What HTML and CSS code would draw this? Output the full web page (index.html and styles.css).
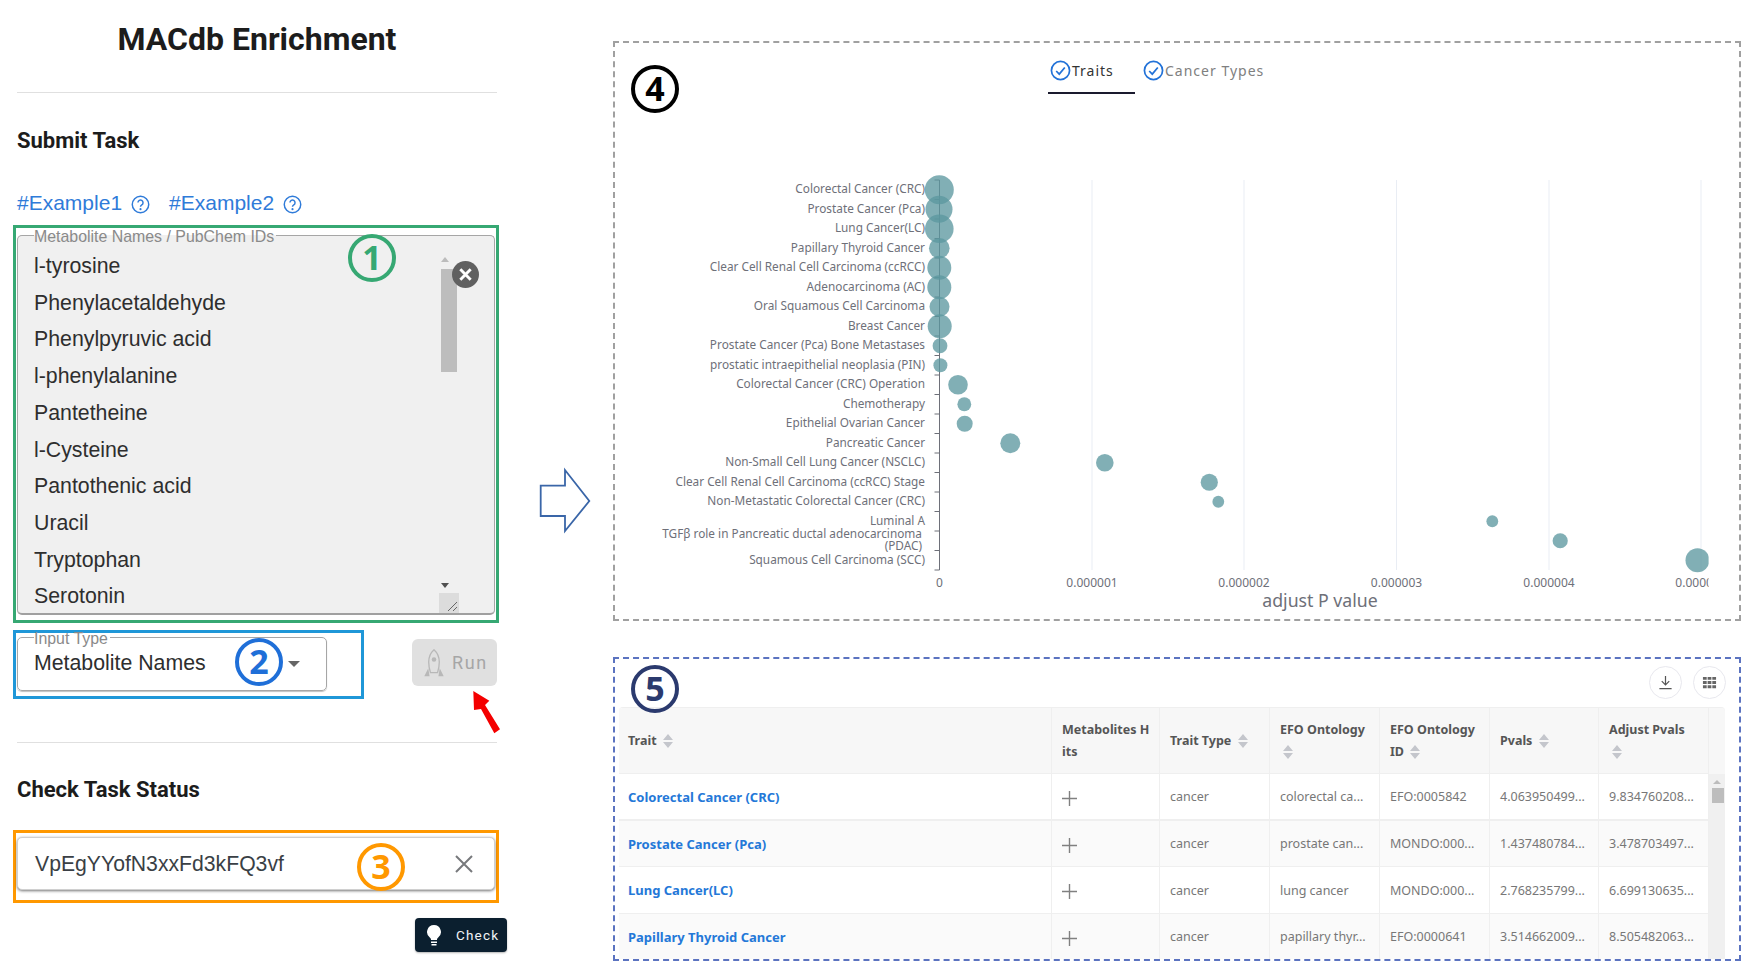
FILE: index.html
```html
<!DOCTYPE html>
<html>
<head>
    <title>MACdb Enrichment</title>
    <meta charset="utf-8">

    <link rel="stylesheet" href="styles.css">

</head>
<body>
<div class="page">

    <div class="sidebar">
        <h1>MACdb Enrichment</h1>
        <hr>

        <h2 class="submit-title">Submit Task</h2>

        <div class="examples">
            <a>#Example1</a>
            <svg class="help" viewBox="0 0 18 18"><circle cx="9" cy="9" r="7.8"/><path d="M6.6 7.2a2.4 2.4 0 1 1 3.6 2.1c-.8.5-1.2.9-1.2 1.8"/><circle class="dot" cx="9" cy="13.4" r="1"/></svg>
            <a class="second">#Example2</a>
            <svg class="help" viewBox="0 0 18 18"><circle cx="9" cy="9" r="7.8"/><path d="M6.6 7.2a2.4 2.4 0 1 1 3.6 2.1c-.8.5-1.2.9-1.2 1.8"/><circle class="dot" cx="9" cy="13.4" r="1"/></svg>
        </div>

        <div class="frame frame-green">
            <fieldset class="names">
                <legend>Metabolite Names / PubChem IDs</legend>
                <div class="name-list">
                    <div>l-tyrosine</div>
                    <div>Phenylacetaldehyde</div>
                    <div>Phenylpyruvic acid</div>
                    <div>l-phenylalanine</div>
                    <div>Pantetheine</div>
                    <div>l-Cysteine</div>
                    <div>Pantothenic acid</div>
                    <div>Uracil</div>
                    <div>Tryptophan</div>
                    <div>Serotonin</div>
                </div>
                <div class="scroll-up"></div>
                <div class="scroll-thumb"></div>
                <div class="scroll-down"></div>
                <div class="resizer">
                    <svg viewBox="0 0 20 20"><path d="M9 18 18 9M14 18l4-4"/></svg>
                </div>
                <svg class="clear-all" viewBox="0 0 26 26"><circle cx="13" cy="13" r="13"/><path d="M8 8l10 10M18 8 8 18"/></svg>
            </fieldset>
            <div class="mark mark-green">1</div>
        </div>

        <div class="type-row">
            <div class="frame frame-blue">
                <fieldset class="type-field">
                    <legend>Input Type</legend>
                    <div class="type-value">
                        <span>Metabolite Names</span>
                        <i class="caret"></i>
                    </div>
                </fieldset>
                <div class="mark mark-blue">2</div>
            </div>
            <button class="run">
                <svg viewBox="0 0 24 34"><path class="hull" d="M12 2c4.500 4 6 9 6 14 0 5-1 9-2 12H8c-1-3-2-7-2-12 0-5 1.500-10 6-14z"/><circle cx="12" cy="13" r="2.600"/><path d="M5.500 23 1 32h6zM18.500 23 23 32h-6z"/></svg>
                <span>Run</span>
            </button>
            <svg class="red-arrow" viewBox="0 0 30 46"><path d="M1.300 1l16 9.700L13 15l15 24.300-5.700 4L9 19l-7 1z"/></svg>
        </div>

        <hr class="second-rule">

        <h2 class="check-title">Check Task Status</h2>

        <div class="frame frame-orange">
            <div class="task-input">
                <span>VpEgYYofN3xxFd3kFQ3vf</span>
                <svg viewBox="0 0 18 18"><path d="M1 1l16 16M17 1 1 17"/></svg>
            </div>
            <div class="mark mark-orange">3</div>
        </div>

        <button class="check">
            <svg viewBox="0 0 16 22"><path d="M8 1a7 7 0 0 0-4 12.700c.8.6 1 1.300 1 2.300h6c0-1 .2-1.700 1-2.300A7 7 0 0 0 8 1z"/><rect x="5" y="17.500" width="6" height="1.500"/><rect x="5.500" y="20" width="5" height="1.500"/></svg>
            <span>Check</span>
        </button>
    </div>

    <svg class="flow-arrow" viewBox="530 460 70 80"><path d="M540.700 485.700H565V470l24.300 31L565 531v-15h-24.300z"/></svg>

    <div class="main">

        <div class="panel chart-panel">
            <div class="mark mark-black">4</div>
            <div class="tabs">
                <div class="tab active">
                    <svg viewBox="0 0 22 22"><circle cx="11" cy="11" r="9.500"/><path d="M6.500 11.500l3.200 3.300 5.800-7"/></svg>
                    <span>Traits</span>
                </div>
                <div class="tab">
                    <svg viewBox="0 0 22 22"><circle cx="11" cy="11" r="9.500"/><path d="M6.500 11.500l3.200 3.300 5.800-7"/></svg>
                    <span>Cancer Types</span>
                </div>
            </div>

            <svg class="chart" viewBox="615 94 1123 525">
                <defs>
                    <clipPath id="plot"><rect x="600" y="94" width="1108.600" height="525"/></clipPath>
                </defs>

                <g class="grid">
                    <path d="M1092 180V570M1244 180V570M1396.500 180V570M1549 180V570M1701 180V570"/>
                </g>

                <g class="axis">
                    <path d="M939.500 180V570M934.500 180h5M934.500 199.500h5M934.500 219h5M934.500 238.500h5M934.500 258h5M934.500 277.500h5M934.500 297h5M934.500 316.500h5M934.500 336h5M934.500 355.500h5M934.500 375h5M934.500 394.500h5M934.500 414h5M934.500 433.500h5M934.500 453h5M934.500 472.500h5M934.500 492h5M934.500 511.500h5M934.500 531h5M934.500 550.500h5M934.500 570h5"/>
                </g>

                <g class="names-axis">
                    <text x="925" y="193">Colorectal Cancer (CRC)</text>
                    <text x="925" y="212.500">Prostate Cancer (Pca)</text>
                    <text x="925" y="232">Lung Cancer(LC)</text>
                    <text x="925" y="251.500">Papillary Thyroid Cancer</text>
                    <text x="925" y="271">Clear Cell Renal Cell Carcinoma (ccRCC)</text>
                    <text x="925" y="290.500">Adenocarcinoma (AC)</text>
                    <text x="925" y="310">Oral Squamous Cell Carcinoma</text>
                    <text x="925" y="329.500">Breast Cancer</text>
                    <text x="925" y="349">Prostate Cancer (Pca) Bone Metastases</text>
                    <text x="925" y="368.500">prostatic intraepithelial neoplasia (PIN)</text>
                    <text x="925" y="388">Colorectal Cancer (CRC) Operation</text>
                    <text x="925" y="407.500">Chemotherapy</text>
                    <text x="925" y="427">Epithelial Ovarian Cancer</text>
                    <text x="925" y="446.500">Pancreatic Cancer</text>
                    <text x="925" y="466">Non-Small Cell Lung Cancer (NSCLC)</text>
                    <text x="925" y="485.500">Clear Cell Renal Cell Carcinoma (ccRCC) Stage</text>
                    <text x="925" y="505">Non-Metastatic Colorectal Cancer (CRC)</text>
                    <text x="925" y="524.500">Luminal A</text>
                    <text x="922" y="537.500">TGFβ role in Pancreatic ductal adenocarcinoma</text>
                    <text x="922" y="549.500">(PDAC)</text>
                    <text x="925" y="563.500">Squamous Cell Carcinoma (SCC)</text>
                </g>

                <g clip-path="url(#plot)">
                    <g class="values-axis">
                        <text x="939.500" y="587">0</text>
                        <text x="1092" y="587">0.000001</text>
                        <text x="1244" y="587">0.000002</text>
                        <text x="1396.500" y="587">0.000003</text>
                        <text x="1549" y="587">0.000004</text>
                        <text x="1701" y="587">0.000005</text>
                    </g>
                    <g class="bubbles">
                        <circle cx="939.300" cy="189.750" r="14.500"/>
                        <circle cx="939" cy="209.250" r="13.500"/>
                        <circle cx="939.300" cy="228.750" r="14.300"/>
                        <circle cx="939.300" cy="248.250" r="10.300"/>
                        <circle cx="939.300" cy="267.750" r="12"/>
                        <circle cx="939.300" cy="287.250" r="12"/>
                        <circle cx="939.500" cy="306.750" r="10"/>
                        <circle cx="939.700" cy="326.250" r="12"/>
                        <circle cx="940" cy="345.750" r="7.400"/>
                        <circle cx="940.400" cy="365.250" r="7"/>
                        <circle cx="958" cy="384.750" r="9.800"/>
                        <circle cx="964.300" cy="404.250" r="6.900"/>
                        <circle cx="964.700" cy="423.750" r="8"/>
                        <circle cx="1010.300" cy="443.250" r="10"/>
                        <circle cx="1104.800" cy="462.750" r="8.800"/>
                        <circle cx="1209.300" cy="482.250" r="8.600"/>
                        <circle cx="1218.300" cy="501.750" r="5.900"/>
                        <circle cx="1492.300" cy="521.250" r="5.900"/>
                        <circle cx="1560.200" cy="540.750" r="7.600"/>
                        <circle cx="1697.500" cy="560.250" r="12"/>
                    </g>
                </g>

                <text class="axis-name" x="1320" y="607">adjust P value</text>
            </svg>
        </div>

        <div class="panel table-panel">
            <div class="mark mark-navy">5</div>

            <div class="toolbar">
                <div class="round-btn">
                    <svg viewBox="0 0 16 16"><path d="M8 1v9M4 6.500 8 10.500l4-4M1.500 14.500h13"/></svg>
                </div>
                <div class="round-btn">
                    <svg viewBox="0 0 16 16"><path class="cells" d="M1 2h4v3H1zM6 2h4v3H6zM11 2h4v3h-4zM1 6.500h4v3H1zM6 6.500h4v3H6zM11 6.500h4v3h-4zM1 11h4v3H1zM6 11h4v3H6zM11 11h4v3h-4z"/></svg>
                </div>
            </div>

            <div class="table-wrap">
                <table>
                    <colgroup>
                        <col class="c1"><col class="c2"><col class="c3"><col class="c4"><col class="c5"><col class="c6"><col class="c7">
                    </colgroup>
                    <thead>
                        <tr>
                            <th>Trait <svg class="sort" viewBox="0 0 10 14"><path d="M5 0l5 6H0zM5 14 0 8h10z"/></svg></th>
                            <th class="hits">Metabolites H<br>its</th>
                            <th>Trait Type <svg class="sort" viewBox="0 0 10 14"><path d="M5 0l5 6H0zM5 14 0 8h10z"/></svg></th>
                            <th>EFO Ontology <svg class="sort" viewBox="0 0 10 14"><path d="M5 0l5 6H0zM5 14 0 8h10z"/></svg></th>
                            <th>EFO Ontology ID <svg class="sort" viewBox="0 0 10 14"><path d="M5 0l5 6H0zM5 14 0 8h10z"/></svg></th>
                            <th>Pvals <svg class="sort" viewBox="0 0 10 14"><path d="M5 0l5 6H0zM5 14 0 8h10z"/></svg></th>
                            <th>Adjust Pvals <svg class="sort" viewBox="0 0 10 14"><path d="M5 0l5 6H0zM5 14 0 8h10z"/></svg></th>
                        </tr>
                    </thead>
                    <tbody>
                        <tr>
                            <td><a>Colorectal Cancer (CRC)</a></td>
                            <td><svg class="plus" viewBox="0 0 14 14"><path d="M7 0v14M0 7h14"/></svg></td>
                            <td>cancer</td>
                            <td>colorectal ca...</td>
                            <td>EFO:0005842</td>
                            <td>4.063950499...</td>
                            <td>9.834760208...</td>
                        </tr>
                        <tr>
                            <td><a>Prostate Cancer (Pca)</a></td>
                            <td><svg class="plus" viewBox="0 0 14 14"><path d="M7 0v14M0 7h14"/></svg></td>
                            <td>cancer</td>
                            <td>prostate can...</td>
                            <td>MONDO:000...</td>
                            <td>1.437480784...</td>
                            <td>3.478703497...</td>
                        </tr>
                        <tr>
                            <td><a>Lung Cancer(LC)</a></td>
                            <td><svg class="plus" viewBox="0 0 14 14"><path d="M7 0v14M0 7h14"/></svg></td>
                            <td>cancer</td>
                            <td>lung cancer</td>
                            <td>MONDO:000...</td>
                            <td>2.768235799...</td>
                            <td>6.699130635...</td>
                        </tr>
                        <tr>
                            <td><a>Papillary Thyroid Cancer</a></td>
                            <td><svg class="plus" viewBox="0 0 14 14"><path d="M7 0v14M0 7h14"/></svg></td>
                            <td>cancer</td>
                            <td>papillary thyr...</td>
                            <td>EFO:0000641</td>
                            <td>3.514662009...</td>
                            <td>8.505482063...</td>
                        </tr>
                    </tbody>
                </table>
                <div class="table-scroll">
                    <div class="table-scroll-head"></div>
                    <div class="table-scroll-up"></div>
                    <div class="table-scroll-thumb"></div>
                </div>
            </div>
        </div>

    </div>
</div>
</body>
</html>
```

FILE: styles.css
```css
html,body{
    padding: 0;
    margin: 0;
    background: #fff;
}

.page{
    position: relative;
    display: flex;
    width: 1741px;
    height: 962px;
    overflow: hidden;
    font-family: "Liberation Sans", Arial, sans-serif;
}

/* left column */
.sidebar{
    width: 480px;
    margin-left: 17px;
    flex: none;
}

h1{
    margin: 0;
    font-family: Roboto, sans-serif;
    font-size: 32px;
    font-weight: 700;
    line-height: 79px;
    text-align: center;
    color: #1c1c1c;
}

hr{
    margin: 13px 0 0;
    border: 0;
    height: 1px;
    background: #e0e0e0;
}

.second-rule{
    margin-top: 43px;
}

h2{
    margin: 0;
    font-family: Roboto, sans-serif;
    font-size: 22px;
    font-weight: 700;
    line-height: 30px;
    color: #1c1c1c;
}

.submit-title{
    margin-top: 33px;
}

.check-title{
    margin-top: 32px;
}

.examples{
    display: flex;
    align-items: center;
    height: 30px;
    margin-top: 32px;
    font-size: 21px;
    color: #2f7bd9;
}

.examples .second{
    margin-left: 19px;
}

.help{
    width: 19px;
    height: 19px;
    margin: 3px 0 0 9px;
    fill: none;
    stroke: #2f7bd9;
    stroke-width: 1.4;
}

.help .dot{
    fill: #2f7bd9;
    stroke: none;
}

.frame{
    position: relative;
    box-sizing: border-box;
    margin-left: -4px;
    border: 3px solid;
    padding: 0 1px;
}

.frame-green{
    margin-top: 7px;
    width: 486px;
    height: 398px;
    border-color: #36a873;
}

.frame-blue{
    width: 351px;
    height: 69px;
    border-color: #1f97d8;
    padding-right: 34px;
}

.frame-orange{
    margin-top: 25px;
    width: 486px;
    height: 73px;
    padding-top: 4px;
    border-color: #ff9800;
}

fieldset{
    position: relative;
    margin: 0;
    padding: 0;
    min-width: 0;
    border: 1px solid #a6a6a6;
    border-radius: 5px;
}

legend{
    margin-left: 16px;
    padding: 0 2px 0 0;
    height: 14px;
    line-height: 18px;
    font-size: 15.9px;
    color: #8a8a8a;
}

.names{
    height: 387px;
    box-sizing: border-box;
    background: #f0f0f0;
    border-bottom: 2px solid #a0a0a0;
}

.name-list{
    padding: 6px 0 0 16px;
    font-size: 21.3px;
    line-height: 36.7px;
    color: #2e2e2e;
    overflow: hidden;
    height: 366px;
}

.scroll-up,
.scroll-down{
    position: absolute;
    left: 423px;
    width: 0;
    height: 0;
    border-left: 4px solid transparent;
    border-right: 4px solid transparent;
}

.scroll-up{
    top: 15px;
    border-bottom: 5px solid #bcbcbc;
}

.scroll-down{
    top: 341px;
    border-top: 5px solid #505050;
}

.scroll-thumb{
    position: absolute;
    left: 423px;
    top: 27px;
    width: 16px;
    height: 103px;
    background: #bdbdbd;
}

.resizer{
    position: absolute;
    left: 421px;
    bottom: 0;
    width: 20px;
    height: 20px;
    background: #dcdcdc;
}

.resizer svg{
    display: block;
    width: 20px;
    height: 20px;
    fill: none;
    stroke: #666;
    stroke-width: 1;
}

.clear-all{
    position: absolute;
    left: 434px;
    top: 19px;
    width: 27px;
    height: 27px;
    fill: #606060;
    stroke: #fff;
    stroke-width: 2.8;
}

.clear-all circle{
    stroke: none;
}

.type-row{
    position: relative;
    display: flex;
    align-items: flex-start;
    margin-top: 7px;
}

.type-field{
    height: 56px;
    background: #fff;
    box-shadow: 0 1px 1px rgba(0,0,0,.25);
}

.type-field legend{
    height: 8px;
    line-height: 12px;
}

.type-value{
    display: flex;
    align-items: center;
    justify-content: space-between;
    height: 44px;
    padding: 1px 26px 0 16px;
    box-sizing: border-box;
    font-size: 21.3px;
    color: #2e2e2e;
}

.caret{
    width: 0;
    height: 0;
    border-left: 6px solid transparent;
    border-right: 6px solid transparent;
    border-top: 6px solid #666;
}

.run{
    display: flex;
    align-items: center;
    box-sizing: border-box;
    width: 85px;
    height: 47px;
    margin: 9px 0 0 auto;
    padding: 0 0 0 11px;
    border: 0;
    border-radius: 6px;
    background: #e0e0e0;
    font-family: Roboto, sans-serif;
    font-size: 18px;
    letter-spacing: 1.6px;
    color: #a6a6a6;
}

.run svg{
    width: 22px;
    height: 30px;
    margin-right: 7px;
    fill: #b8b8b8;
}

.run .hull{
    fill: none;
    stroke: #b8b8b8;
    stroke-width: 1.500;
}

.red-arrow{
    position: absolute;
    left: 455px;
    top: 60px;
    width: 30px;
    height: 46px;
    fill: #f40000;
}

.task-input{
    display: flex;
    align-items: center;
    justify-content: space-between;
    box-sizing: border-box;
    height: 53px;
    padding: 0 21px 0 17px;
    border: 1px solid #d0d0d0;
    border-radius: 5px;
    box-shadow: 0 1px 3px rgba(0,0,0,.55);
    font-size: 21.2px;
    color: #3a3f45;
    background: #fff;
}

.task-input svg{
    width: 18px;
    height: 18px;
    fill: none;
    stroke: #77797c;
    stroke-width: 2;
}

.check{
    display: flex;
    align-items: center;
    box-sizing: border-box;
    width: 92px;
    height: 34px;
    margin: 15px 0 0 398px;
    padding: 0 0 0 11px;
    border: 0;
    border-radius: 4px;
    background: #0b1f2f;
    box-shadow: 0 1px 2px rgba(0,0,0,.3);
    font-family: Roboto, sans-serif;
    font-size: 13.5px;
    letter-spacing: 1.2px;
    color: #f1f4f6;
}

.check svg{
    width: 16px;
    height: 22px;
    margin-right: 14px;
    fill: #fff;
}

/* circled numbers lying over the panels */
.mark{
    position: absolute;
    box-sizing: border-box;
    width: 48px;
    height: 48px;
    border: 4px solid;
    border-radius: 50%;
    background: transparent;
    font-family: "Noto Sans", sans-serif;
    font-weight: 700;
    font-size: 34px;
    line-height: 39px;
    text-align: center;
}

.mark-green{
    left: 332px;
    top: 6px;
    color: #36a873;
}

.mark-blue{
    left: 219px;
    top: 5px;
    color: #1f6fd8;
}

.mark-orange{
    left: 341px;
    top: 10px;
    color: #ff9800;
}

.mark-black{
    left: 16px;
    top: 22px;
    color: #000;
}

.mark-navy{
    left: 16px;
    top: 6px;
    color: #2b3a6e;
}

.flow-arrow{
    position: absolute;
    left: 530px;
    top: 460px;
    width: 70px;
    height: 80px;
    fill: #fff;
    stroke: #3a66a8;
    stroke-width: 1.800;
}

/* right column */
.main{
    flex: none;
    width: 1128px;
    margin-left: 116px;
    padding-top: 41px;
}

.panel{
    position: relative;
    box-sizing: border-box;
    border: 2px dashed #a0a0a0;
}

.chart-panel{
    height: 580px;
}

.tabs{
    display: flex;
    height: 51px;
    margin-left: 433px;
    font-family: "Noto Sans", sans-serif;
    font-size: 14px;
    letter-spacing: 1px;
    color: #808080;
}

.tab{
    display: flex;
    align-items: center;
    box-sizing: border-box;
    height: 51px;
    padding: 7px 0 2px 2px;
    border-bottom: 2px solid transparent;
}

.tab + .tab{
    margin-left: 6px;
}

.tab.active{
    width: 87px;
    border-bottom-color: #1a1a2e;
    color: #333;
}

.tab svg{
    width: 21px;
    height: 21px;
    margin-right: 1px;
    fill: none;
    stroke: #2272d8;
    stroke-width: 1.800;
}

.chart{
    display: block;
    width: 1123px;
    height: 525px;
    font-family: "Noto Sans", sans-serif;
}

.grid path{
    fill: none;
    stroke: #e9edf4;
    stroke-width: 1;
}

.axis path{
    fill: none;
    stroke: #6e7079;
    stroke-width: 1;
}

.names-axis text{
    font-size: 11.800px;
    text-anchor: end;
    fill: #6e7079;
}

.values-axis text{
    font-size: 12px;
    text-anchor: middle;
    fill: #6e7079;
}

.bubbles circle{
    fill: #5b979f;
    opacity: .77;
}

.axis-name{
    font-size: 17.700px;
    text-anchor: middle;
    fill: #6e7079;
}

.table-panel{
    height: 304px;
    margin-top: 36px;
    border-color: #5b73c0;
    overflow: hidden;
}

.toolbar{
    display: flex;
    justify-content: flex-end;
    gap: 11px;
    height: 48px;
    padding: 7px 13px 0 0;
    box-sizing: border-box;
}

.round-btn{
    display: flex;
    align-items: center;
    justify-content: center;
    box-sizing: border-box;
    width: 33px;
    height: 33px;
    border: 1px solid #e8e8ee;
    border-radius: 50%;
}

.round-btn svg{
    width: 15px;
    height: 15px;
    fill: none;
    stroke: #555;
    stroke-width: 1.300;
}

.round-btn .cells{
    fill: #666;
    stroke: none;
}

.table-wrap{
    display: flex;
    width: 1106px;
    margin-left: 4px;
    border-top: 1px solid #efefef;
    border-radius: 4px 4px 0 0;
    overflow: hidden;
}

table{
    table-layout: fixed;
    width: 1090px;
    flex: none;
    border-collapse: separate;
    border-spacing: 0;
    font-family: "Noto Sans", sans-serif;
    font-size: 12.5px;
    color: #777;
}

.c1{ width: 433px; }
.c2{ width: 108px; }
.c3{ width: 110px; }
.c4{ width: 110px; }
.c5{ width: 110px; }
.c6{ width: 109px; }
.c7{ width: 110px; }

th,
td{
    box-sizing: border-box;
    padding: 0 10px;
    border-right: 1px solid #efefef;
    border-bottom: 1px solid #efefef;
    text-align: left;
    white-space: normal;
}

th:first-child,
td:first-child{
    padding-left: 9px;
}

th{
    height: 66px;
    background: #f7f7f7;
    font-weight: 700;
    line-height: 21.700px;
    color: #555;
}

th.hits{
    white-space: nowrap;
}

td{
    height: 46.500px;
    padding-top: 1px;
}

tbody tr:nth-child(even) td{
    background: #fafafa;
}

tbody tr:first-child td{
    border-bottom-width: 2px;
}

td a{
    font-size: 13px;
    font-weight: 700;
    color: #2478d8;
}

.sort{
    width: 10px;
    height: 14px;
    margin-left: 3px;
    vertical-align: -3px;
    fill: #c4c6cc;
}

.plus{
    display: block;
    width: 15px;
    height: 15px;
    margin-top: 3px;
    fill: none;
    stroke: #808080;
    stroke-width: 1.300;
}

.table-scroll{
    position: relative;
    width: 16px;
    flex: none;
    background: #f0f0f0;
}

.table-scroll-head{
    height: 66px;
    background: #f7f7f7;
}

.table-scroll-up{
    margin: 6px auto 0;
    width: 0;
    height: 0;
    border-left: 4px solid transparent;
    border-right: 4px solid transparent;
    border-bottom: 4px solid #bcbcbc;
}

.table-scroll-thumb{
    margin: 4px 1px 0 3px;
    height: 15px;
    background: #bdbdbd;
}
```
